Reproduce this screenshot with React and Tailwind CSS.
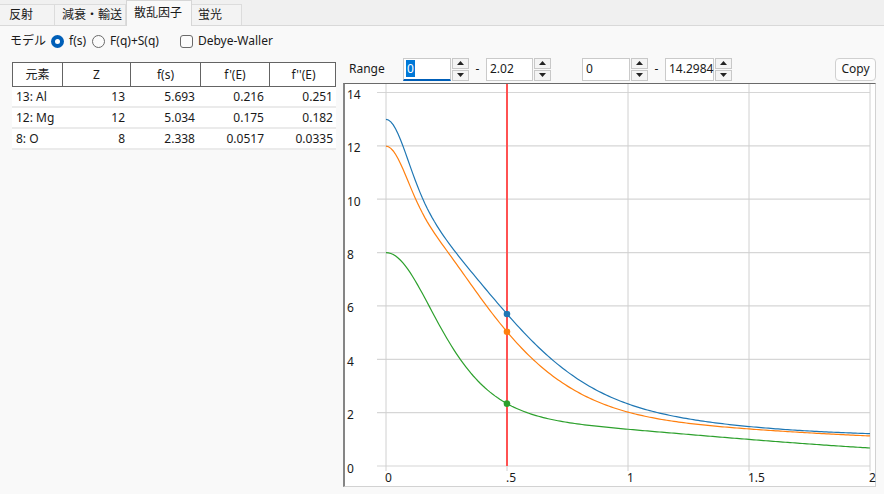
import { useMemo } from 'react';

const ROWS = [
    { label: '13: Al', z: 13, fs: '5.693', f1: '0.216', f2: '0.251', color: '#1f77b4', a: [6.4202, 1.9002, 1.5936, 1.9646], b: [3.0387, 0.7426, 31.5472, 85.0886], c: 1.1151 },
    { label: '12: Mg', z: 12, fs: '5.034', f1: '0.175', f2: '0.182', color: '#ff7f0e', a: [5.4204, 2.1735, 1.2269, 2.3073], b: [2.8275, 79.2611, 0.3808, 7.1937], c: 0.8584 },
    { label: '8: O', z: 8, fs: '2.338', f1: '0.0517', f2: '0.0335', color: '#2ca02c', a: [3.0485, 2.2868, 1.5463, 0.867], b: [13.2771, 5.7011, 0.3239, 32.9089], c: 0.2508 },
];

const sf = (el, s) => el.a.reduce((t, a, i) => t + a * Math.exp(-el.b[i] * s * s), el.c);

// plot coordinates inside the chart frame
const X = (s) => 41 + 242 * s;
const Y = (v) => 382 - 26.68 * v;

function Tabs() {
    return (
        <div className="flex h-[25px] items-end">
            <div className="flex h-[21px] w-[55px] items-center border-r border-t border-[#dcdcdc] bg-[#f3f3f3] pl-[9px]">反射</div>
            <div className="flex h-[21px] w-[71px] items-center border-r border-t border-[#dcdcdc] bg-[#f3f3f3] pl-[7px]">減衰・輸送</div>
            <div className="relative z-10 -mb-px flex h-[26px] w-[66px] items-start border-x border-t border-[#d6d6d6] bg-[#f9f9f9] pl-[7px] pt-[3px]">散乱因子</div>
            <div className="flex h-[21px] w-[50px] items-center border-r border-t border-[#dcdcdc] bg-[#f3f3f3] pl-[6px]">蛍光</div>
        </div>
    );
}

function ModelRow() {
    return (
        <div className="flex h-[30px] items-center pl-[10px]">
            <span className="mr-[5px]">モデル</span>
            <span className="mr-[5px] flex h-[13px] w-[13px] items-center justify-center rounded-full bg-[#005fb8]">
                <span className="h-[5px] w-[5px] rounded-full bg-white" />
            </span>
            <span className="mr-[6px]">f(s)</span>
            <span className="mr-[5px] h-[13px] w-[13px] rounded-full border border-[#6a6a6a] bg-[#fbfbfb]" />
            <span className="mr-[21px]">F(q)+S(q)</span>
            <span className="mr-[5px] h-[13px] w-[13px] rounded-[3px] border border-[#6a6a6a] bg-[#fbfbfb]" />
            <span>Debye-Waller</span>
        </div>
    );
}

function DataTable() {
    const cols = 'grid grid-cols-[50px_68px_70px_69px_67px]';
    return (
        <div className="w-[324px]">
            <div className={`${cols} h-[25px] border border-[#646464] bg-white`}>
                {['元素', 'Z', 'f(s)', "f'(E)", "f''(E)"].map((h, i) => (
                    <div key={h} className={`flex items-center justify-center ${i < 4 ? 'border-r border-[#646464]' : ''}`}>{h}</div>
                ))}
            </div>
            {ROWS.map((r) => (
                <div key={r.label} className={`${cols} h-[21px] items-center border-b-2 border-[#ebebeb] bg-white`}>
                    <div className="pl-[4px]">{r.label}</div>
                    <div className="pr-[5px] text-right">{r.z}</div>
                    <div className="pr-[5px] text-right">{r.fs}</div>
                    <div className="pr-[5px] text-right">{r.f1}</div>
                    <div className="pr-[3px] text-right">{r.f2}</div>
                </div>
            ))}
        </div>
    );
}

function Spin({ value, width = 'w-[48px]', focused }) {
    return (
        <div className="flex h-[23px] gap-px">
            <div className={`relative flex ${width} items-center border border-[#cacaca] bg-white pl-[2px] ${focused ? 'border-b-2 border-b-[#005fb8]' : ''}`}>
                {focused ? <span className="bg-[#0078d7] px-px leading-[17px] text-white">{value}</span> : <span className="pl-px">{value}</span>}
            </div>
            <div className="flex w-[17px] flex-col gap-px">
                <div className="flex flex-1 items-center justify-center border border-[#c8c8c8] bg-[#f4f4f4]">
                    <svg width="7" height="4" viewBox="0 0 7 4"><path d="M0 4 L3.5 0 L7 4 Z" fill="#222" /></svg>
                </div>
                <div className="flex flex-1 items-center justify-center border border-[#c8c8c8] bg-[#f4f4f4]">
                    <svg width="7" height="4" viewBox="0 0 7 4"><path d="M0 0 L3.5 4 L7 0 Z" fill="#222" /></svg>
                </div>
            </div>
        </div>
    );
}

function RangeRow() {
    return (
        <div className="flex h-[24px] items-center pl-[6px] pr-[8px]">
            <span className="w-[54px]">Range</span>
            <Spin value="0" focused />
            <span className="w-[17px] text-center">-</span>
            <Spin value="2.02" width="w-[47px]" />
            <span className="w-[31px]" />
            <Spin value="0" width="w-[48px]" />
            <span className="w-[17px] text-center">-</span>
            <Spin value="14.2984" width="w-[49px]" />
            <button className="ml-auto h-[23px] w-[41px] rounded-[4px] border border-[#d0d0d0] bg-[#fdfdfd]">Copy</button>
        </div>
    );
}

function Chart() {
    const paths = useMemo(
        () =>
            ROWS.map((r) => {
                const pts = [];
                for (let i = 0; i <= 200; i++) {
                    const s = i / 100;
                    pts.push(`${X(s).toFixed(2)},${Y(sf(r, s)).toFixed(2)}`);
                }
                return 'M' + pts.join(' L');
            }),
        []
    );
    const ys = [0, 2, 4, 6, 8, 10, 12, 14];
    const xs = [
        [0, '0'],
        [0.5, '.5'],
        [1, '1'],
        [1.5, '1.5'],
        [2, '2'],
    ];
    return (
        <div className="mr-[8px] mt-[2px] h-[404px] border-b border-l-2 border-r border-t border-b-[#d2d2d2] border-l-[#858585] border-r-[#d2d2d2] border-t-[#6a6a6a] bg-white">
            <svg width="530" height="402" className="block overflow-visible" fontFamily="Noto Sans, sans-serif" fontSize="12">
                {ys.map((v) => (
                    <g key={v}>
                        <line x1="32" x2="525" y1={Y(v)} y2={Y(v)} stroke="#d6d6d6" strokeWidth="1.2" />
                        <text x="2" y={Y(v) + 6.5} fill="#1a1a1a">{v}</text>
                    </g>
                ))}
                {xs.map(([s, t]) => (
                    <g key={t}>
                        <line x1={X(s)} x2={X(s)} y1="0" y2="387" stroke="#d0d0d0" strokeWidth="1" />
                        <text x={X(s) - 1} y="398" fill="#1a1a1a">{t}</text>
                    </g>
                ))}
                {paths.map((d, i) => (
                    <path key={i} d={d} fill="none" stroke={ROWS[i].color} strokeWidth="1.2" />
                ))}
                <line x1={X(0.5)} x2={X(0.5)} y1="0" y2="382" stroke="#ff5252" strokeWidth="2" />
                {ROWS.map((r) => (
                    <circle key={r.label} cx={X(0.5)} cy={Y(sf(r, 0.5))} r="3.3" fill={r.color} />
                ))}
            </svg>
        </div>
    );
}

export default function App() {
    return (
        <div className="flex h-[494px] w-[884px] flex-col overflow-hidden bg-[#f0f0f0] font-['Noto_Sans','Noto_Sans_CJK_JP',sans-serif] text-[12px] text-[#1a1a1a]">
            <Tabs />
            <div className="flex flex-1 flex-col border-t border-[#d9d9d9] bg-[#f9f9f9]">
                <ModelRow />
                <div className="flex flex-1">
                    <div className="w-[343px] pl-[12px] pt-[6px]">
                        <DataTable />
                    </div>
                    <div className="flex flex-1 flex-col pt-px">
                        <RangeRow />
                        <Chart />
                    </div>
                </div>
            </div>
        </div>
    );
}
